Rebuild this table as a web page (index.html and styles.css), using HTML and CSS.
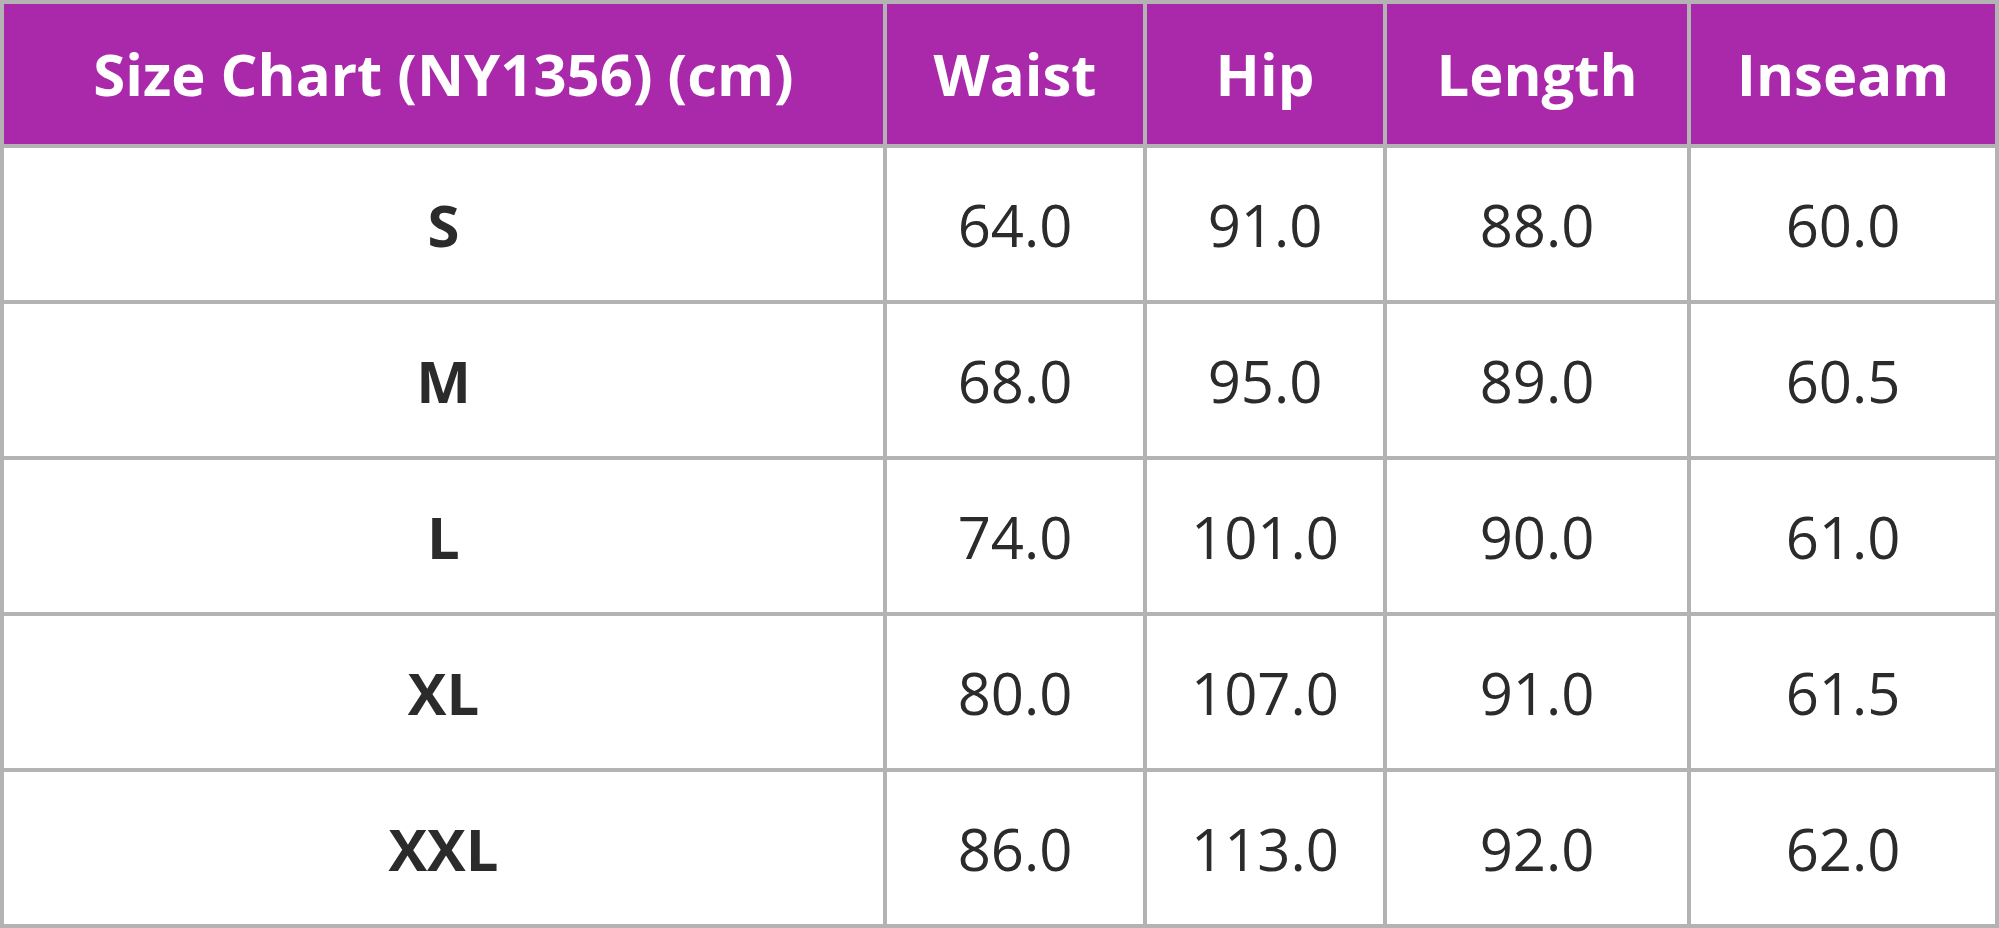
FILE: index.html
```html
<!DOCTYPE html>
<html>
<head>
<meta charset="utf-8">
<link rel="stylesheet" href="styles.css">
</head>
<body>
<div class="chart">
  <div class="cell head">Size Chart (NY1356) (cm)</div>
  <div class="cell head">Waist</div>
  <div class="cell head">Hip</div>
  <div class="cell head">Length</div>
  <div class="cell head">Inseam</div>

  <div class="cell size">S</div>
  <div class="cell">64.0</div>
  <div class="cell">91.0</div>
  <div class="cell">88.0</div>
  <div class="cell">60.0</div>

  <div class="cell size">M</div>
  <div class="cell">68.0</div>
  <div class="cell">95.0</div>
  <div class="cell">89.0</div>
  <div class="cell">60.5</div>

  <div class="cell size">L</div>
  <div class="cell">74.0</div>
  <div class="cell">101.0</div>
  <div class="cell">90.0</div>
  <div class="cell">61.0</div>

  <div class="cell size">XL</div>
  <div class="cell">80.0</div>
  <div class="cell">107.0</div>
  <div class="cell">91.0</div>
  <div class="cell">61.5</div>

  <div class="cell size">XXL</div>
  <div class="cell">86.0</div>
  <div class="cell">113.0</div>
  <div class="cell">92.0</div>
  <div class="cell">62.0</div>
</div>
</body>
</html>
```

FILE: styles.css
```css
html, body {
  margin: 0;
  padding: 0;
  background: #ffffff;
}

.chart {
  display: grid;
  grid-template-columns: 879px 256px 236px 300px 304px;
  grid-template-rows: 140px repeat(5, 152px);
  gap: 4px;
  padding: 4px;
  background: #b3b3b3;
  width: 1999px;
  height: 928px;
  box-sizing: border-box;
  font-family: "Open Sans", "Noto Sans", sans-serif;
  color: #2b2b2b;
}

.cell {
  background: #ffffff;
  display: flex;
  align-items: center;
  justify-content: center;
  font-size: 58px;
  font-weight: 400;
}

.cell.head {
  background: #aa28aa;
  color: #ffffff;
  font-weight: 700;
  padding-bottom: 2px;
  box-sizing: border-box;
}

.cell.size {
  font-weight: 700;
}
```
